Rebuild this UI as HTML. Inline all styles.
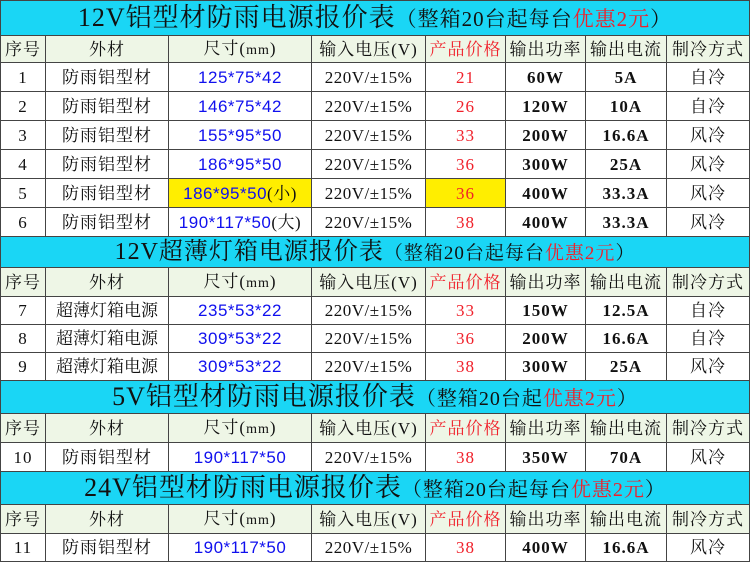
<!DOCTYPE html>
<html><head><meta charset="utf-8"><style>
body{margin:0;background:#fff;width:750px;height:563px;overflow:hidden}
table{position:absolute;left:0;top:0;border-collapse:collapse;table-layout:fixed;width:749px;font-family:"Liberation Serif","Noto Serif CJK SC",serif;font-size:17px;color:#111;letter-spacing:1px}
td{border:1px solid #444;padding:0;text-align:center;white-space:nowrap;overflow:hidden;line-height:1}
.t{background:#1ad6f5;font-size:26px;text-align:center;letter-spacing:1px}
.t small{font-size:21px;letter-spacing:1px}
.r{color:#f0202a}
.h{background:#eef6e6}
.h td{font-size:17px}
.b{color:#1010ee;font-family:"Liberation Sans","Noto Sans CJK SC",sans-serif;font-size:17px;letter-spacing:0.5px}
.w{font-weight:bold}
.y{background:#ffee00}
.sm{font-size:14px}
.v{letter-spacing:0.5px;font-size:17px}
.p{font-family:'Liberation Serif','Noto Serif CJK SC',serif;color:#111}
</style></head><body>
<table>
<colgroup><col style="width:45px"><col style="width:123px"><col style="width:143px"><col style="width:114px"><col style="width:80px"><col style="width:80px"><col style="width:81px"><col style="width:83px"></colgroup>
<tr style="height:35px"><td colspan="8" class="t">12V铝型材防雨电源报价表<small>（整箱20台起每台<span class="r">优惠2元</span>）</small></td></tr>
<tr class="h" style="height:27px"><td>序号</td><td>外材</td><td>尺寸(<span class="sm">mm</span>)</td><td>输入电压(V)</td><td class="r">产品价格</td><td>输出功率</td><td>输出电流</td><td>制冷方式</td></tr>
<tr style="height:29px"><td>1</td><td>防雨铝型材</td><td class="b">125*75*42</td><td class="v">220V/±15%</td><td class="r">21</td><td class="w">60W</td><td class="w">5A</td><td>自冷</td></tr>
<tr style="height:29px"><td>2</td><td>防雨铝型材</td><td class="b">146*75*42</td><td class="v">220V/±15%</td><td class="r">26</td><td class="w">120W</td><td class="w">10A</td><td>自冷</td></tr>
<tr style="height:29px"><td>3</td><td>防雨铝型材</td><td class="b">155*95*50</td><td class="v">220V/±15%</td><td class="r">33</td><td class="w">200W</td><td class="w">16.6A</td><td>风冷</td></tr>
<tr style="height:29px"><td>4</td><td>防雨铝型材</td><td class="b">186*95*50</td><td class="v">220V/±15%</td><td class="r">36</td><td class="w">300W</td><td class="w">25A</td><td>风冷</td></tr>
<tr style="height:29px"><td>5</td><td>防雨铝型材</td><td class="b y">186*95*50<span class="p">(小)</span></td><td class="v">220V/±15%</td><td class="r y">36</td><td class="w">400W</td><td class="w">33.3A</td><td>风冷</td></tr>
<tr style="height:29px"><td>6</td><td>防雨铝型材</td><td class="b">190*117*50<span class="p">(大)</span></td><td class="v">220V/±15%</td><td class="r">38</td><td class="w">400W</td><td class="w">33.3A</td><td>风冷</td></tr>
<tr style="height:31px"><td colspan="8" class="t" style="font-size:24px">12V超薄灯箱电源报价表<small style="font-size:19px">（整箱20台起每台<span class="r">优惠2元</span>）</small></td></tr>
<tr class="h" style="height:29px"><td>序号</td><td>外材</td><td>尺寸(<span class="sm">mm</span>)</td><td>输入电压(V)</td><td class="r">产品价格</td><td>输出功率</td><td>输出电流</td><td>制冷方式</td></tr>
<tr style="height:28px"><td>7</td><td style="letter-spacing:0">超薄灯箱电源</td><td class="b">235*53*22</td><td class="v">220V/±15%</td><td class="r">33</td><td class="w">150W</td><td class="w">12.5A</td><td>自冷</td></tr>
<tr style="height:28px"><td>8</td><td style="letter-spacing:0">超薄灯箱电源</td><td class="b">309*53*22</td><td class="v">220V/±15%</td><td class="r">36</td><td class="w">200W</td><td class="w">16.6A</td><td>自冷</td></tr>
<tr style="height:28px"><td>9</td><td style="letter-spacing:0">超薄灯箱电源</td><td class="b">309*53*22</td><td class="v">220V/±15%</td><td class="r">38</td><td class="w">300W</td><td class="w">25A</td><td>风冷</td></tr>
<tr style="height:33px"><td colspan="8" class="t">5V铝型材防雨电源报价表<small style="font-size:20px">（整箱20台起<span class="r">优惠2元</span>）</small></td></tr>
<tr class="h" style="height:29px"><td>序号</td><td>外材</td><td>尺寸(<span class="sm">mm</span>)</td><td>输入电压(V)</td><td class="r">产品价格</td><td>输出功率</td><td>输出电流</td><td>制冷方式</td></tr>
<tr style="height:29px"><td>10</td><td>防雨铝型材</td><td class="b">190*117*50</td><td class="v">220V/±15%</td><td class="r">38</td><td class="w">350W</td><td class="w">70A</td><td>风冷</td></tr>
<tr style="height:33px"><td colspan="8" class="t">24V铝型材防雨电源报价表<small style="font-size:20px">（整箱20台起每台<span class="r">优惠2元</span>）</small></td></tr>
<tr class="h" style="height:29px"><td>序号</td><td>外材</td><td>尺寸(<span class="sm">mm</span>)</td><td>输入电压(V)</td><td class="r">产品价格</td><td>输出功率</td><td>输出电流</td><td>制冷方式</td></tr>
<tr style="height:28px"><td>11</td><td>防雨铝型材</td><td class="b">190*117*50</td><td class="v">220V/±15%</td><td class="r">38</td><td class="w">400W</td><td class="w">16.6A</td><td>风冷</td></tr>
</table>
</body></html>
